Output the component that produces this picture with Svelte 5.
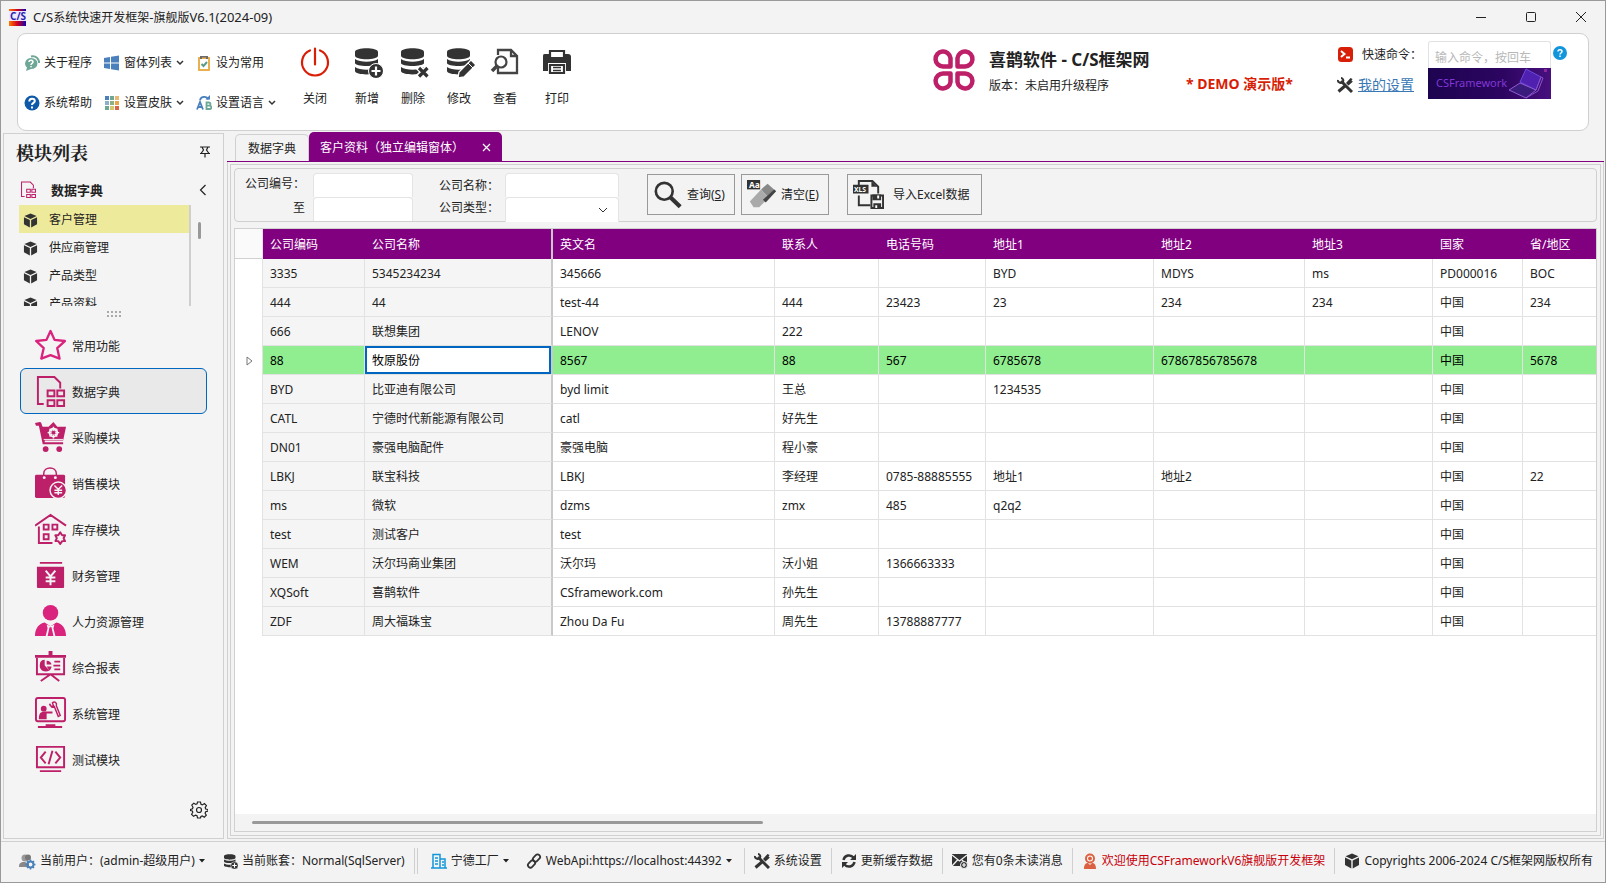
<script>
	const icons = {
		chat: '<path fill="#6fa796" d="M7 3a6.5 5.5 0 0 1 0 11l-5 2 1-3.500A6 5.500 0 0 1 7 3z"/><path fill="none" stroke="#6fa796" stroke-width="2" d="M7 1.500c5 -1 8 2 8.200 6.500"/><path fill="none" stroke="#fff" stroke-width="1.500" d="M5 7c0-2.500 4-2.500 4 0 0 1.500-2 1.300-2 3M7 11v1.300"/>',
		windows: '<path fill="#4a80bb" d="M0 3l6-1v5.500H0zM7 1.800L15 .5v7H7zM0 8.500h6V14l-6-1zM7 8.500h8v7L7 14.200z"/>',
		clip: '<path fill="#fff" stroke="#eab04f" stroke-width="2" d="M3 3h10v12H3z"/><path fill="#6b6b6b" d="M4 1h8v3h-2V2.500H6V4H4z"/><path fill="none" stroke="#5c9b88" stroke-width="2" d="M5.500 9l2 2 3.500-4"/>',
		help: '<circle cx="8" cy="8" r="7.500" fill="#0e5aa8"/><path fill="none" stroke="#fff" stroke-width="2" d="M5.300 6.500c0-4 5.500-3.500 5.500-.5C10.800 8 8 7.800 8 10M8 11.500v2"/>',
		palette: '<path fill="#4a80bb" d="M1 1h4v4H1z"/><path fill="#6fa796" d="M6 1h4v4H6zM1 11h4v4H1z"/><path fill="#eab872" d="M11 1h4v4h-4z"/><path fill="#8ab0ca" d="M1 6h4v4H1z"/><path fill="#8fae81" d="M6 6h4v4H6z"/><path fill="#e8a64c" d="M11 6h4v4h-4z"/><path fill="#d5c670" d="M6 11h4v4H6z"/><path fill="#d76543" d="M11 11h4v4h-4z"/>',
		lang: '<path fill="none" stroke="#4a80bb" stroke-width="1.800" d="M1 14.500L4 7l3 7.500M2 12h4M4 5C5 1 11 1 12 4.500"/><path fill="#4a80bb" d="M9.500 4.500H14V0z"/><path fill="none" stroke="#6fa796" stroke-width="1.800" d="M10.500 7.500v6.500h3c2.500 0 2.500-3.300 0-3.300h-3 2.500c2 0 2-3.200 0-3.200z"/>',
		power: '<path fill="none" stroke="#d81e06" stroke-width="2.200" stroke-linecap="round" d="M11 4.500a13 13 0 1 0 10 0M16 2.500v16"/>',
		db: '<path fill="#333" d="M4 6c0-5 23-5 23 0v3.500c0 5-23 5-23 0zM4 13c5 3.500 18 3.500 23 0v4c0 4-23 4-23 0zM4 21c5 3.500 18 3.500 23 0v4c0 4.500-23 4.500-23 0z"/>',
		plus: '<circle cx="25" cy="25" r="7.500" fill="#333" stroke="#fff"/><path stroke="#fff" stroke-width="2.200" d="M20.500 25h9M25 20.500v9"/>',
		cross: '<path stroke="#fff" stroke-width="6" d="M21 21l10 10m0-10L21 31"/><path stroke="#333" stroke-width="3.200" d="M22 22l8.500 8.500m0-8.500L22 30.500"/>',
		pencil: '<path fill="#333" stroke="#fff" stroke-width="1.300" d="M15 32l1-6L28 14l5 5-12 12z"/><path stroke="#fff" d="M25 17l5 5"/>',
		view: '<path fill="none" stroke="#444" stroke-width="2.300" d="M9 9V4h13l6 6v17H9v-5M22 4v6h6"/><circle cx="12" cy="16" r="5.500" fill="#fff" stroke="#444" stroke-width="2.200"/><path stroke="#444" stroke-width="3.500" d="M8 20l-5 5"/>',
		printer: '<path fill="#333" d="M2 10c0-2 1-2 3-2h22c2 0 3 1 3 3v14H2z"/><path fill="#fff" stroke="#333" stroke-width="2.200" d="M9 5h14v7H9z"/><path fill="#fff" stroke="#fff" stroke-width="4" d="M9 19h14v8H9z"/><path fill="#fff" stroke="#333" stroke-width="2.200" d="M9 19h14v8H9z"/><path stroke="#333" stroke-width="1.500" d="M12 21.500h8M12 24.500h8"/>',
		terminal: '<rect x="1" y="1" width="15" height="15" rx="3.500" fill="#d81e06"/><path fill="none" stroke="#fff" stroke-width="2" d="M4 5l3.500 3L4 11M9 11.500h4"/>',
		tools: '<path stroke="#333" stroke-width="3" d="M4 4l11 11M1.500 14.500l7-6"/><path fill="none" stroke="#333" stroke-width="2" d="M1 3c-.5 3 4 4 5 1.500C7 3 5.500 1 4 1"/><path fill="#333" d="M9 6l4.500-5 2 1-1 2 1.500.5-4.500 4z"/>',
		star: '<path fill="none" stroke="#d9237d" stroke-width="2.400" stroke-linejoin="round" d="M16 2l4.200 9.200 10.600 1.200-7.900 7.300 2.400 10.800L16 27l-9.500 3.500L9 19.700 1.200 12.400l10.600-1.200z"/>',
		dict: '<path fill="none" stroke="#bd1f68" stroke-width="2" d="M9 30H3V2h17l6 6v6"/><path fill="none" stroke="#bd1f68" stroke-width="2" d="M13 16h7v6h-7zM23 16h7v6h-7zM13 26h7v6h-7zM23 26h7v6h-7z"/>',
		cart: '<path fill="#bd1f68" d="M0 2l5-1c2 0 2 4 3 5h6l5-5 4 5h9l-3 14H10v2h19v2H8L4 5H1z"/><circle cx="19" cy="12" r="4" fill="none" stroke="#f4f4f4" stroke-width="2"/><path stroke="#f4f4f4" stroke-width="1.500" d="M19 6v12M13 12h12M15 8l8 8m0-8l-8 8"/><circle cx="19" cy="12" r="2" fill="#bd1f68"/><path stroke="#f4f4f4" d="M9 19h20"/><circle cx="11" cy="29" r="3" fill="#bd1f68"/><circle cx="25" cy="29" r="3" fill="#bd1f68"/>',
		bag: '<rect y="8" width="31" height="24" rx="1.500" fill="#bd1f68"/><path fill="none" stroke="#bd1f68" stroke-width="1.500" d="M9 11V7c0-8 13-8 13 0v4"/><circle cx="9.500" cy="11" r="1.500" fill="#f4f4f4"/><circle cx="21" cy="11" r="1.500" fill="#f4f4f4"/><circle cx="24" cy="24" r="8.500" fill="#bd1f68" stroke="#f4f4f4" stroke-width="1.500"/><path fill="none" stroke="#f4f4f4" stroke-width="1.500" d="M20 19l4 4 4-4M24 23v6M20 24h8M20 26.500h8"/>',
		house: '<path fill="none" stroke="#bd1f68" stroke-width="2" d="M0 13L16 2l16 11M4 14v17h14M9 12h5v5H9zM18 12h5v5h-5zM9 22h5v5H9z"/><path fill="none" stroke="#bd1f68" stroke-width="2" stroke-linejoin="round" d="M26 20l2 3h3l-1.500 3L31 29h-3l-2 3-2-3h-3l1.500-3L21 23h3z"/>',
		finance: '<path fill="#bd1f68" d="M5 3h23v2H5zM2 8h28v21a1 1 0 0 1-1 1H3a1 1 0 0 1-1-1z"/><path fill="none" stroke="#f4f4f4" stroke-width="2" d="M11 12l5 6 5-6M16 18v9M11 19h10M11 23h10"/>',
		hr: '<circle cx="16" cy="8" r="8" fill="#d9237d"/><path fill="#d9237d" d="M0 32c0-8 4-13 10-14l6 4 6-4c6 1 10 6 10 14z"/><path fill="#f4f4f4" d="M12 20l4 2 4-2-1 4 2 8H11l2-8z"/><path fill="#d9237d" d="M15 23h2l2 9h-6z"/>',
		report: '<path fill="#bd1f68" d="M0 4h14V0h4v4h14v3H0z"/><path fill="none" stroke="#bd1f68" stroke-width="2" d="M2 7v17h28V7M16 24L6 31M16 24l9 7"/><path fill="#bd1f68" d="M10 9v6l5 5c-5 3-11 0-10-6 0-3 2-5 5-5zM12 10c3 0 5 2 5 4h-5zM12 16h5c0 2-1 3-2 4z"/><path stroke="#bd1f68" stroke-width="1.800" d="M20 11h6M19 15h7M20 19h6"/>',
		system: '<rect x="1" y="1" width="30" height="24" rx="2" fill="none" stroke="#bd1f68" stroke-width="2"/><circle cx="9" cy="12" r="3" fill="#bd1f68"/><path fill="#bd1f68" d="M4 23c0-7 2-8 8-8h6v2h-6v6zM11 28h10v2h7v2H3v-2h8z"/><path fill="none" stroke="#bd1f68" stroke-width="1.500" d="M15 7c1 4 4 4 5 3l4 10 2-1-4-10c1-3-2-5-4-3l1 3-2 1z"/>',
		code: '<path fill="none" stroke="#bd1f68" stroke-width="2" d="M2 4h28v21H2zM5 29h22"/><path fill="none" stroke="#bd1f68" stroke-width="2" d="M11 9l-5 6 5 6M21 9l5 6-5 6M18 8l-4 14"/>',
		cube: '<path fill="#333" d="M8 .5l6.500 2.700L8 6.300 1.500 3.200zM1 4.500l6.300 3v8L1 12zM15 4.500v7.500l-6.300 3.500v-8z"/>',
		search: '<circle cx="12" cy="12" r="9" fill="none" stroke="#333" stroke-width="2.800"/><path stroke="#333" stroke-width="4.500" d="M18.500 18.500L29 28.500"/>',
		eraser: '<path fill="#888" d="M22 4l9 8-8 7-8-9z"/><path fill="#aaa" d="M15 10l8 9-10 10H7l-4-6z"/><path fill="#444" d="M31 12l-2-2-12 11 3 3z"/><path fill="#333" d="M0 0h14v10H0z"/>',
		excel: '<path fill="none" stroke="#333" stroke-width="2" d="M6 8V2h14l6 6v7M6 17v10h12"/><path fill="#333" d="M19 2l7 7v-1h-7zM0 6h16v9H0z"/><path fill="none" stroke="#333" stroke-width="2" d="M19 17h12v13H19z"/><path fill="#333" d="M20 16h9v6h-9zM21 25h8v5h-8z"/><path fill="#fff" d="M25 17h2v3h-2zM23 27h2v3h-2z"/>',
		user: '<circle cx="6" cy="5" r="3.500" fill="#999"/><path fill="#888" d="M0 14c0-5 3-5 6-5l4 2v3z"/><circle cx="9" cy="4.500" r="3" fill="#777"/><circle cx="11.500" cy="11.500" r="3" fill="none" stroke="#4a80bb" stroke-width="2"/><path stroke="#4a80bb" stroke-width="1.500" d="M11.500 6.500v2.500M11.500 14v2.500M6.500 11.500H9M14 11.500h2.500M8 8l2 2M13 13l2 2M15 8l-2 2M10 13l-2 2"/>',
		building: '<path fill="none" stroke="#1296db" stroke-width="1.500" d="M2 15V1.500h7V15M9 6h5v9M0 15h16M4 5h3M4 8h3M4 11h3M11 9h2M11 12h2"/>',
		link: '<g fill="none" stroke="#333" stroke-width="1.800"><rect x="8" y="1" width="5" height="8" rx="2.500" transform="rotate(45 10.500 5)"/><rect x="3" y="7" width="5" height="8" rx="2.500" transform="rotate(45 5.500 11)"/></g>',
		refresh: '<path fill="none" stroke="#333" stroke-width="2.500" d="M2.500 7c1-5 7-6 10-2.500M13.500 9c-1 5-7 6-10 2.500"/><path fill="#333" d="M15 1v6H9zM1 15V9h6z"/>',
		mail: '<path fill="#333" d="M0 1h15v12H0z"/><path fill="none" stroke="#f3f3f3" stroke-width="1.300" d="M0 2l7.500 6L15 2M0 13l5.500-6M10 7l3 3"/><circle cx="12" cy="12" r="3.500" fill="#333" stroke="#f3f3f3"/><path stroke="#fff" stroke-width="1.200" d="M10 12h4M12 10v4"/>',
		person: '<circle cx="8" cy="5.500" r="4" fill="#fff" stroke="#dc6142" stroke-width="2"/><path fill="#dc6142" d="M2 16c0-5 2-6 4-6l2 2 2-2c2 0 4 1 4 6z"/><circle cx="8" cy="5.500" r="2" fill="#dc6142"/>'
	};
	const smallCols = [
		[['chat', '关于程序'], ['help', '系统帮助']],
		[['windows', '窗体列表', true], ['palette', '设置皮肤', true]],
		[['clip', '设为常用'], ['lang', '设置语言', true]]
	];
	const bigButtons = [
		{ text: '关闭', icon: icons.power, wide: true },
		{ text: '新增', icon: icons.db + icons.plus },
		{ text: '删除', icon: icons.db + icons.cross },
		{ text: '修改', icon: icons.db + icons.pencil },
		{ text: '查看', icon: icons.view },
		{ text: '打印', icon: icons.printer, wide: true }
	];
	const modules = [
		['star', '常用功能'], ['dict', '数据字典'], ['cart', '采购模块'], ['bag', '销售模块'], ['house', '库存模块'],
		['finance', '财务管理'], ['hr', '人力资源管理'], ['report', '综合报表'], ['system', '系统管理'], ['code', '测试模块']
	];
	const functions = ['客户管理', '供应商管理', '产品类型', '产品资料'];
	const headers = ['公司编码', '公司名称', '英文名', '联系人', '电话号码', '地址1', '地址2', '地址3', '国家', '省/地区'];
	const rows = [
		['3335', '5345234234', '345666', '', '', 'BYD', 'MDYS', 'ms', 'PD000016', 'BOC'],
		['444', '44', 'test-44', '444', '23423', '23', '234', '234', '中国', '234'],
		['666', '联想集团', 'LENOV', '222', '', '', '', '', '中国', ''],
		['88', '牧原股份', '8567', '88', '567', '6785678', '67867856785678', '', '中国', '5678'],
		['BYD', '比亚迪有限公司', 'byd limit', '王总', '', '1234535', '', '', '中国', ''],
		['CATL', '宁德时代新能源有限公司', 'catl', '好先生', '', '', '', '', '中国', ''],
		['DN01', '豪强电脑配件', '豪强电脑', '程小豪', '', '', '', '', '中国', ''],
		['LBKJ', '联宝科技', 'LBKJ', '李经理', '0785-88885555', '地址1', '地址2', '', '中国', '22'],
		['ms', '微软', 'dzms', 'zmx', '485', 'q2q2', '', '', '中国', ''],
		['test', '测试客户', 'test', '', '', '', '', '', '中国', ''],
		['WEM', '沃尔玛商业集团', '沃尔玛', '沃小姐', '1366663333', '', '', '', '中国', ''],
		['XQSoft', '喜鹊软件', 'CSframework.com', '孙先生', '', '', '', '', '中国', ''],
		['ZDF', '周大福珠宝', 'Zhou Da Fu', '周先生', '13788887777', '', '', '', '中国', '']
	];
	let currentRow = $state(3);
	let currentFn = $state(0);
	let currentModule = $state(1);
</script>

{#snippet icon(body, size, box)}
	<svg width={size} height={size} viewBox="0 0 {box} {box}" aria-hidden="true">{@html body}</svg>
{/snippet}

{#snippet chevron()}
	<svg width="8" height="6" viewBox="0 0 8 6" aria-hidden="true"><path d="M1 1l3 3 3-3" fill="none" stroke="#333" stroke-width="1.5" /></svg>
{/snippet}

{#snippet caret()}
	<svg width="6" height="4" viewBox="0 0 6 4" aria-hidden="true"><path d="M0 0h6L3 3.500z" fill="#222" /></svg>
{/snippet}

<div class="window">
	<header class="titlebar">
		<svg width="17" height="17" viewBox="0 0 17 17" role="img" aria-label="C/S">
			<defs>
				<linearGradient id="lg"><stop stop-color="#ff7a00" /><stop offset=".5" stop-color="#d00020" /><stop offset="1" stop-color="#1400b0" /></linearGradient>
			</defs>
			<path fill="url(#lg)" d="M0 0h17v17H0z" />
			<path fill="#eee8ff" d="M0 2h17v10H0z" />
			<text x="1" y="11" font-size="10" font-weight="bold" fill="#2d1fae">C/S</text>
		</svg>
		<h1>C/S<span>系统快速开发框架</span>-<span>旗舰版</span>V6.1(2024-09)</h1>
		<div class="winbtns">
			<button aria-label="最小化"><svg width="12" height="12"><path d="M1 6.500h10" stroke="#222" /></svg></button>
			<button aria-label="最大化"><svg width="12" height="12"><rect x="1.500" y="1.500" width="9" height="9" rx="1" fill="none" stroke="#222" /></svg></button>
			<button aria-label="关闭窗口"><svg width="12" height="12"><path d="M1 1l10 10M11 1L1 11" stroke="#222" /></svg></button>
		</div>
	</header>

	<section class="ribbon">
		<div class="small-group">
			{#each smallCols as col}
				<div class="small-col">
					{#each col as [name, text, drop]}
						<button class="small">{@render icon(icons[name], 16, 16)}<span>{text}</span>{#if drop}{@render chevron()}{/if}</button>
					{/each}
				</div>
			{/each}
		</div>
		<div class="big-group">
			{#each bigButtons as b}
				<button class="big" class:wide={b.wide}>{@render icon(b.icon, 32, 32)}<span>{b.text}</span></button>
			{/each}
		</div>
		<div class="brand">
			<svg width="42" height="44" viewBox="0 0 42 44" aria-hidden="true">
				<g fill="none" stroke="#bd1f68" stroke-width="4.500" stroke-linejoin="round">
					<path d="M17.500 18.500V10a7.500 7.500 0 1 0-7.500 8.500z" />
					<path d="M24.500 18.500V10a7.500 7.500 0 1 1 7.500 8.500z" />
					<path d="M17.500 25.500V34a7.500 7.500 0 1 1-7.500-8.500z" />
					<path d="M24.500 25.500V34a7.500 7.500 0 1 0 7.500-8.500z" />
				</g>
			</svg>
			<div class="brand-text">
				<strong>喜鹊软件 - C/S框架网</strong>
				<p>版本：未启用升级程序</p>
			</div>
			<b class="demo">* DEMO 演示版*</b>
		</div>
		<div class="quick">
			<div class="quick-left">
				<label for="cmd">{@render icon(icons.terminal, 17, 17)}<span>快速命令：</span></label>
				<a href="#settings">{@render icon(icons.tools, 16, 16)}<span>我的设置</span></a>
			</div>
			<div class="quick-box">
				<input id="cmd" placeholder="输入命令，按回车" />
				<div class="banner">
					<span>CSFramework</span>
					<svg width="42" height="31" viewBox="0 0 42 31" aria-hidden="true">
						<path fill="#8a2a9a" d="M35 1h3v3h-3z" />
						<path fill="#5020b0" stroke="#6a4be0" d="M11 14L17 1l15 8-5 13z" />
						<path fill="#3a1c7c" stroke="#8f5bd0" d="M0 22l11-7 16 7-10 8z" />
						<path fill="none" stroke="#8a52c8" d="M27 22l5-13 2 1-5 13-12 7" />
					</svg>
				</div>
			</div>
			<button class="tip" aria-label="帮助"><svg width="14" height="14" viewBox="0 0 14 14"><circle cx="7" cy="7" r="7" fill="#1296db" /><path d="M5 5.500C5 3 9 3 9 5.500 9 7 7 7 7 8.500M7 9.500V11" fill="none" stroke="#fff" stroke-width="1.5" /></svg></button>
		</div>
	</section>

	<main>
		<aside>
			<div class="side-title">
				<h2>模块列表</h2>
				<button aria-label="固定"><svg width="10" height="12" viewBox="0 0 10 12"><path d="M0 1h10M2 1l1.500 3L1 7.500M8 1L6.500 4 9 7.500M0 7.500h10M5 7.500V11.500" fill="none" stroke="#222" stroke-width="1.2" /></svg></button>
			</div>
			<div class="side-head">
				<svg width="17" height="17" viewBox="0 0 33 33" aria-hidden="true">{@html icons.dict}</svg>
				<h3>数据字典</h3>
				<button aria-label="收起"><svg width="8" height="12" viewBox="0 0 8 12"><path d="M6.500 1l-5 5 5 5" fill="none" stroke="#222" stroke-width="1.2" /></svg></button>
			</div>
			<div class="fn-wrap">
				<ul class="fns">
					{#each functions as f, i}
						<li><button class:on={i === currentFn} onclick={() => (currentFn = i)}>{@render icon(icons.cube, 15, 16)}<span>{f}</span></button></li>
					{/each}
				</ul>
				<i class="thumb"></i>
			</div>
			<div class="grip">
				{#each Array(8) as _}<i></i>{/each}
			</div>
			<nav>
				{#each modules as [name, text], i}
					<button class:on={i === currentModule} onclick={() => (currentModule = i)}>{@render icon(icons[name], 32, 33)}<span>{text}</span></button>
				{/each}
			</nav>
			<button class="gear" aria-label="选项">
				<svg width="18" height="18" viewBox="0 0 18 18"><path d="M7.500 1h3l.5 2.300 1.400.6 2-1.300 2 2-1.200 2 .5 1.400 2.300.5v1.500l-2.300.8-.6 1.400 1.200 2-2 2-2-1.200-1.400.5L10.500 17h-3L7 14.700l-1.400-.6-2 1.200-2-2 1.200-2-.5-1.300L.5 9.500v-1l2-.8.5-1.500-1.200-2 2-2 2 1.200 1.300-.5z" fill="none" stroke="#222" stroke-width="1.2" /><circle cx="9" cy="9" r="2.500" fill="none" stroke="#222" stroke-width="1.2" /></svg>
			</button>
		</aside>

		<section class="docs">
			<div class="tabs">
				<button class="tab">数据字典</button>
				<button class="tab active">客户资料（独立编辑窗体）<svg width="9" height="9" viewBox="0 0 9 9"><path d="M1 1l7 7M8 1L1 8" stroke="#fff" stroke-width="1.2" /></svg></button>
			</div>
			<div class="frame">
				<div class="page">
					<div class="filters">
						<div class="labels first">
							<label for="from">公司编号：</label>
							<label for="to">至</label>
						</div>
						<div class="fields"><input id="from" /><input id="to" /></div>
						<div class="labels second">
							<label for="cname">公司名称：</label>
							<label for="ctype">公司类型：</label>
						</div>
						<div class="fields wide">
							<input id="cname" />
							<select id="ctype"><option></option></select>
						</div>
						<button class="act">{@render icon(icons.search, 30, 32)}<span>查询(<u>S</u>)</span></button>
						<button class="act">
							<svg width="30" height="30" viewBox="0 0 32 32" aria-hidden="true">{@html icons.eraser}<text x="2" y="8" font-size="9" font-weight="bold" fill="#fff">Aa</text></svg>
							<span>清空(<u>E</u>)</span>
						</button>
						<button class="act import">
							<svg width="31" height="31" viewBox="0 0 32 32" aria-hidden="true">{@html icons.excel}<text x="1" y="13" font-size="7" font-weight="bold" fill="#fff">XLS</text></svg>
							<span>导入Excel数据</span>
						</button>
					</div>

					<div class="grid">
						<table>
							<colgroup>
								<col class="w-ind" /><col class="w-code" /><col class="w-name" /><col class="w-en" /><col class="w-man" /><col class="w-tel" />
								<col class="w-a1" /><col class="w-a2" /><col class="w-a3" /><col class="w-country" /><col />
							</colgroup>
							<thead>
								<tr>
									<td class="ind"></td>
									{#each headers as h, c}<th class:split={c === 1}>{h}</th>{/each}
								</tr>
							</thead>
							<tbody>
								{#each rows as row, r}
									<tr class:current={r === currentRow} onclick={() => (currentRow = r)}>
										<td class="ind">
											{#if r === currentRow}<svg width="7" height="10" viewBox="0 0 7 10"><path d="M1 1l5 4-5 4z" fill="none" stroke="#777" /></svg>{/if}
										</td>
										{#each row as cell, c}
											<td class:fixed={c < 2} class:split={c === 1} class:focus={c === 1 && r === currentRow}>{cell}</td>
										{/each}
									</tr>
								{/each}
							</tbody>
						</table>
						<div class="hscroll"><i></i></div>
					</div>
				</div>
			</div>
		</section>
	</main>

	<footer>
		<button class="s1">{@render icon(icons.user, 17, 17)}<span>当前用户：(admin-超级用户)</span>{@render caret()}</button>
		<div class="s2">{@render icon(icons.db + icons.plus, 16, 32)}<span>当前账套：Normal(SqlServer)</span></div>
		<i></i>
		<button class="s3">{@render icon(icons.building, 16, 16)}<span>宁德工厂</span>{@render caret()}</button>
		<button class="s4">{@render icon(icons.link, 16, 16)}<span>WebApi:https://localhost:44392</span>{@render caret()}</button>
		<button class="s5">{@render icon(icons.tools, 16, 16)}<span>系统设置</span></button>
		<button class="s5">{@render icon(icons.refresh, 16, 16)}<span>更新缓存数据</span></button>
		<button class="s5">{@render icon(icons.mail, 16, 16)}<span>您有0条未读消息</span></button>
		<div class="s5 welcome">{@render icon(icons.person, 16, 16)}<span>欢迎使用CSFrameworkV6旗舰版开发框架</span></div>
		<div class="s5 copy">{@render icon(icons.cube, 16, 16)}<span>Copyrights 2006-2024 C/S框架网版权所有</span></div>
	</footer>
</div>

<style>
:global(body){
	margin:0;
}
*{
	box-sizing:border-box;
}
h1, h2, h3, p, ul{
	margin:0;
	padding:0;
}
button, input, select{
	font:inherit;
	color:inherit;
	margin:0;
}
button{
	display:flex;
	align-items:center;
	padding:0;
	border:0;
	background:none;
	white-space:nowrap;
}
svg{
	display:block;
	flex:none;
}
.window{
	display:flex;
	flex-direction:column;
	height:100vh;
	border:1px solid #999;
	background:#f3f3f3;
	color:#222;
	font:12px/16px "Noto Sans", "Noto Sans CJK SC", sans-serif;
	overflow:hidden;
}
.titlebar{
	display:flex;
	align-items:center;
	height:32px;
	flex:none;
	padding:0 18px 0 8px;
}
.titlebar h1{
	font-size:13px;
	font-weight:400;
	margin-left:7px;
}
.titlebar h1 span{
	font-size:12px;
}
.winbtns{
	display:flex;
	gap:38px;
	margin-left:auto;
}

.ribbon{
	display:flex;
	height:98px;
	flex:none;
	margin:0 16px;
	padding-left:6px;
	background:#fff;
	border:1px solid #d0d0d0;
	border-radius:9px;
}
.small-group{
	display:flex;
	gap:12px;
	padding-top:21px;
	width:262px;
}
.small-col{
	display:flex;
	flex-direction:column;
	gap:24px;
}
.small{
	gap:4px;
}
.big-group{
	display:flex;
	align-items:flex-start;
	padding-top:12px;
}
.big{
	flex-direction:column;
	gap:13px;
	width:46px;
}
.big.wide{
	width:58px;
}
.brand{
	display:flex;
	margin-left:auto;
	padding-top:14px;
}
.brand-text{
	margin-left:14px;
	width:197px;
}
.brand-text strong{
	display:block;
	font-size:17px;
	line-height:24px;
	white-space:nowrap;
}
.brand-text p{
	line-height:28px;
}
.demo{
	color:#d81e06;
	font-size:14px;
	line-height:18px;
	margin-top:27px;
	width:151px;
	white-space:nowrap;
}
.quick{
	display:flex;
	padding:7px 21px 0 0;
}
.quick-left{
	display:flex;
	flex-direction:column;
	gap:14px;
	width:91px;
	padding-top:5px;
}
.quick-left label, .quick-left a{
	display:flex;
	align-items:center;
	gap:8px;
	white-space:nowrap;
}
.quick-left a{
	gap:5px;
	font-size:14px;
	color:#3a78b5;
}
.quick-box{
	width:123px;
}
.quick-box input{
	display:block;
	width:100%;
	height:27px;
	padding:4px 6px 0;
	border:1px solid #e2e2e2;
	border-bottom:0;
	border-radius:3px 3px 0 0;
	background:#fff;
}
.quick-box input::placeholder{
	color:#b8b8b8;
}
.banner{
	display:flex;
	justify-content:space-between;
	height:31px;
	padding-left:8px;
	overflow:hidden;
	font-size:11px;
	line-height:30px;
	color:#8038d4;
	background:linear-gradient(90deg, #1d0450, #2c0560 60%, #48107e);
}
.tip{
	align-self:flex-start;
	margin:5px 0 0 2px;
}

main{
	display:flex;
	flex:1;
	min-height:0;
	padding:1px 1px 2px 2px;
}
aside{
	display:flex;
	flex-direction:column;
	width:221px;
	flex:none;
	margin:1px 3px 0 0;
	border:1px solid #d0d0d0;
	background:#f4f4f4;
}
.side-title{
	display:flex;
	justify-content:space-between;
	align-items:center;
	height:36px;
	padding:0 13px 0 12px;
}
h2{
	font:bold 18px/24px "Noto Serif CJK SC", "Noto Sans CJK SC", serif;
}
.side-head{
	display:flex;
	align-items:center;
	height:35px;
	padding:4px 16px 0 16px;
}
h3{
	font-size:13px;
	margin-left:14px;
}
.side-head button{
	margin-left:auto;
}
.fn-wrap{
	display:flex;
	height:101px;
	padding-left:15px;
}
.fns{
	width:172px;
	overflow:hidden;
	list-style:none;
	border-right:2px solid #cfcfcf;
}
.fns button{
	width:100%;
	height:28px;
	padding:2px 0 0 4px;
	gap:11px;
}
.fns button.on{
	background:#eeea9c;
}
.thumb{
	width:3px;
	height:17px;
	margin:17px 0 0 7px;
	border-radius:2px;
	background:#999;
}
.grip{
	display:grid;
	grid-template-columns:repeat(4, 2px);
	gap:2px;
	justify-content:center;
	align-content:start;
	padding-top:5px;
	height:16px;
}
.grip i{
	height:2px;
	background:#aaa;
}
nav{
	padding:0 16px;
}
nav button{
	width:100%;
	height:46px;
	padding-left:14px;
	gap:5px;
	border:1px solid transparent;
	border-radius:6px;
}
nav button.on{
	background:#e9e9e9;
	border-color:#0067c0;
}
nav span{
	padding-top:3px;
}
.gear{
	margin:auto 15px 19px auto;
}

.docs{
	display:flex;
	flex-direction:column;
	flex:1;
	min-width:0;
}
.tabs{
	display:flex;
	align-items:flex-end;
	height:30px;
	flex:none;
	padding-left:8px;
	border-bottom:1px solid #800080;
}
.tab{
	height:27px;
	padding:2px 12px 0;
	border:1px solid #d0d0d0;
	border-bottom:0;
	border-radius:5px 5px 0 0;
}
.tab.active{
	height:29px;
	gap:18px;
	padding:2px 11px 0;
	background:#800080;
	border:0;
	color:#fff;
}
.frame{
	display:flex;
	flex:1;
	min-height:0;
	padding:2px;
	border:1px solid #d0d0d0;
	border-top:0;
}
.page{
	display:flex;
	flex-direction:column;
	flex:1;
	min-width:0;
	padding:3px;
	border:1px solid #d0d0d0;
}
.filters{
	display:flex;
	height:54px;
	flex:none;
	padding-top:4px;
	border:1px solid #d0d0d0;
	border-radius:4px;
}
.labels{
	display:flex;
	flex-direction:column;
	gap:8px;
	text-align:right;
	white-space:nowrap;
}
.labels.first{
	width:70px;
	margin:3px 8px 0 0;
}
.labels.second{
	width:60px;
	margin:5px 6px 0 26px;
	gap:6px;
}
.fields{
	width:100px;
}
.fields.wide{
	width:114px;
	margin-right:28px;
}
.fields input, .fields select{
	display:block;
	width:100%;
	height:24px;
	border:1px solid #e4e4e4;
	border-bottom:0;
	border-radius:4px 4px 0 0;
	background:#fff;
}
.fields select{
	height:25px;
	appearance:none;
	background:#fff url("data:image/svg+xml,%3Csvg xmlns='http://www.w3.org/2000/svg' width='10' height='6'%3E%3Cpath d='M1 1l4 4 4-4' fill='none' stroke='%23333'/%3E%3C/svg%3E") no-repeat right 10px center;
}
.act{
	height:41px;
	width:88px;
	margin:1px 6px 0 0;
	padding-left:5px;
	gap:4px;
	border:1px solid #999;
}
.act.import{
	width:135px;
	margin-left:12px;
	gap:9px;
}
.grid{
	display:flex;
	flex-direction:column;
	flex:1;
	min-height:0;
	margin-top:6px;
	border:1px solid #d0d0d0;
	background:#fff;
}
table{
	width:100%;
	table-layout:fixed;
	border-spacing:0;
}
.w-ind{width:28px;}
.w-code{width:102px;}
.w-name{width:188px;}
.w-en{width:222px;}
.w-man{width:104px;}
.w-tel{width:107px;}
.w-a1{width:168px;}
.w-a2{width:151px;}
.w-a3{width:128px;}
.w-country{width:90px;}
th{
	height:30px;
	padding:2px 7px 0;
	background:#800080;
	color:#fff;
	font-weight:400;
	text-align:left;
}
td{
	height:29px;
	padding:2px 0 0 7px;
	border:0 solid #e2e2e2;
	border-width:0 1px 1px 0;
	white-space:nowrap;
}
td:last-child{
	border-right:0;
}
.fixed{
	background:#f5f5f5;
}
th.split, td.split{
	border-right:2px solid #c9c9c9;
}
tr.current td{
	background:#90ee90;
	color:#000;
}
td.ind, tr.current td.ind{
	padding:0 0 0 11px;
	background:#fff;
	border-bottom:0;
}
thead td.ind{
	background:#fafafa;
	border-bottom:1px solid #d0d0d0;
}
tr.current td.focus{
	background:#fff;
	box-shadow:inset 0 0 0 2px #0067c0;
}
.hscroll{
	height:17px;
	margin-top:auto;
	padding:7px 0 0 17px;
	background:#f3f3f3;
}
.hscroll i{
	display:block;
	width:38%;
	height:3px;
	border-radius:2px;
	background:#999;
}

footer{
	display:flex;
	align-items:center;
	height:41px;
	flex:none;
	padding:0 8px 2px 18px;
	border-top:1px solid #d0d0d0;
	overflow:hidden;
	white-space:nowrap;
}
footer > *{
	display:flex;
	align-items:center;
	gap:4px;
	flex:none;
}
.s2{
	margin:0 9px 0 17px;
}
footer > i{
	width:4px;
	height:26px;
	border:solid #d0d0d0;
	border-width:0 1px;
}
.s3{
	margin-left:13px;
}
.s4{
	margin:0 12px 0 17px;
}
.s5{
	height:26px;
	padding:0 9px;
	border-left:1px solid #d0d0d0;
}
.copy{
	flex:1;
	min-width:0;
	padding-right:0;
	overflow:hidden;
}
.welcome{
	color:#c8000a;
}
</style>
